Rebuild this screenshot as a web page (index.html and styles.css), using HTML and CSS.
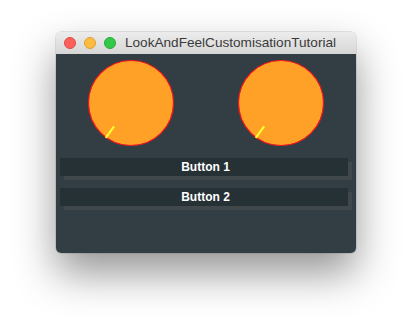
FILE: index.html
```html
<!DOCTYPE html>
<html>
<head>
<meta charset="utf-8">
<link rel="stylesheet" href="styles.css">
</head>
<body>
<div class="stage">
  <div class="window">
    <div class="titlebar">
      <span class="light red"></span>
      <span class="light yellow"></span>
      <span class="light green"></span>
      <span class="title">LookAndFeelCustomisationTutorial</span>
    </div>
    <div class="content">
      <div class="knobs">
        <div class="knob-cell">
          <svg class="knob" width="88" height="88" viewBox="0 0 88 88">
            <circle cx="44" cy="44" r="42.5" fill="#ffa127" stroke="#f5141e" stroke-width="1.2"/>
            <rect x="-1.1" y="-43" width="2.2" height="14.2" fill="#ffff2e" transform="translate(44 44) rotate(216)"/>
          </svg>
        </div>
        <div class="knob-cell">
          <svg class="knob" width="88" height="88" viewBox="0 0 88 88">
            <circle cx="44" cy="44" r="42.5" fill="#ffa127" stroke="#f5141e" stroke-width="1.2"/>
            <rect x="-1.1" y="-43" width="2.2" height="14.2" fill="#ffff2e" transform="translate(44 44) rotate(216)"/>
          </svg>
        </div>
      </div>
      <div class="buttons">
        <div class="btn">Button 1</div>
        <div class="btn">Button 2</div>
      </div>
    </div>
  </div>
</div>
</body>
</html>
```
FILE: styles.css
```css
html, body {
  margin: 0;
  padding: 0;
  background: #ffffff;
}
.stage {
  width: 412px;
  height: 334px;
  padding: 32px 0 0 56px;
  box-sizing: border-box;
  overflow: hidden;
}
.window {
  width: 300px;
  border-radius: 5px;
  overflow: hidden;
  box-shadow: 0 20px 42px rgba(0, 0, 0, 0.42), 0 0 0 0.5px rgba(0, 0, 0, 0.18);
}
.titlebar {
  height: 22px;
  background: linear-gradient(#ececec, #d6d6d6);
  display: flex;
  align-items: center;
  padding-left: 8px;
  box-sizing: border-box;
}
.light {
  width: 12px;
  height: 12px;
  border-radius: 50%;
  margin-right: 8px;
  box-sizing: border-box;
}
.red { background: #fc605b; border: 0.5px solid #de4a45; }
.yellow { background: #fdbc40; border: 0.5px solid #dea033; }
.green { background: #34c84a; border: 0.5px solid #27a93a; margin-right: 9px; }
.title {
  font-family: "Liberation Sans", Arial, sans-serif;
  font-size: 13.6px;
  color: #3a3a3a;
  white-space: nowrap;
  line-height: 22px;
}
.content {
  height: 199px;
  background: #323e44;
  display: flex;
  flex-direction: column;
}
.knobs {
  display: flex;
  padding-top: 5px;
}
.knob-cell {
  width: 150px;
  display: flex;
  justify-content: center;
}
.knob {
  display: block;
}
.buttons {
  display: flex;
  flex-direction: column;
  gap: 12px;
  padding: 11px 0 0 4px;
}
.btn {
  width: 288px;
  height: 18px;
  background: #263136;
  box-shadow: 4px 4px 0 #40484c;
  color: #ffffff;
  font-family: "Liberation Sans", Arial, sans-serif;
  font-weight: bold;
  font-size: 12px;
  line-height: 18px;
  text-align: center;
  text-indent: 3px;
}
```
